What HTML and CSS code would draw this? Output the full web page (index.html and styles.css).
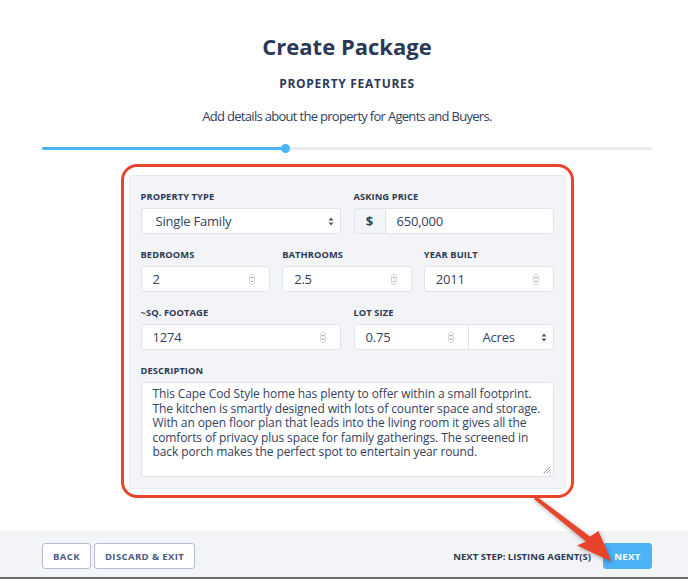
FILE: index.html
```html
<!DOCTYPE html>
<html lang="en">
<head>
  <meta charset="UTF-8" />
  <title>Create Package</title>
  <link rel="stylesheet" href="styles.css">
</head>
<body>
  <div class="page">
    <main class="wizard">
      <h1 class="title">Create Package</h1>
      <h2 class="step-name">PROPERTY FEATURES</h2>
      <p class="step-desc">Add details about the property for Agents and Buyers.</p>

      <div class="progress">
        <div class="progress-fill" style="width: 40%"><span class="progress-dot"></span></div>
      </div>

      <div class="highlight">
        <form class="panel">
          <div class="row cols-2">
            <div class="field">
              <label class="label">PROPERTY TYPE</label>
              <div class="input select select-pad">
                <span>Single Family</span>
                <svg class="sel-arrows" width="6" height="9" viewBox="0 0 6 9"><polygon points="0.5,3.6 3,0.6 5.5,3.6"/><polygon points="0.5,5.4 3,8.4 5.5,5.4"/></svg>
              </div>
            </div>
            <div class="field">
              <label class="label">ASKING PRICE</label>
              <div class="group">
                <span class="addon">$</span>
                <div class="input in-group"><span>650,000</span></div>
              </div>
            </div>
          </div>

          <div class="row cols-3">
            <div class="field">
              <label class="label">BEDROOMS</label>
              <div class="input">
                <span>2</span>
                <svg class="spin" width="6" height="11" viewBox="0 0 6 11"><rect x="0.5" y="0.5" width="5" height="10" rx="2.5"/><path d="M1.8 4.2 L3 3 L4.2 4.2 M1.8 6.8 L3 8 L4.2 6.8"/></svg>
              </div>
            </div>
            <div class="field">
              <label class="label">BATHROOMS</label>
              <div class="input">
                <span>2.5</span>
                <svg class="spin" width="6" height="11" viewBox="0 0 6 11"><rect x="0.5" y="0.5" width="5" height="10" rx="2.5"/><path d="M1.8 4.2 L3 3 L4.2 4.2 M1.8 6.8 L3 8 L4.2 6.8"/></svg>
              </div>
            </div>
            <div class="field">
              <label class="label">YEAR BUILT</label>
              <div class="input">
                <span>2011</span>
                <svg class="spin" width="6" height="11" viewBox="0 0 6 11"><rect x="0.5" y="0.5" width="5" height="10" rx="2.5"/><path d="M1.8 4.2 L3 3 L4.2 4.2 M1.8 6.8 L3 8 L4.2 6.8"/></svg>
              </div>
            </div>
          </div>

          <div class="row cols-2">
            <div class="field">
              <label class="label">~SQ. FOOTAGE</label>
              <div class="input">
                <span>1274</span>
                <svg class="spin" width="6" height="11" viewBox="0 0 6 11"><rect x="0.5" y="0.5" width="5" height="10" rx="2.5"/><path d="M1.8 4.2 L3 3 L4.2 4.2 M1.8 6.8 L3 8 L4.2 6.8"/></svg>
              </div>
            </div>
            <div class="field">
              <label class="label">LOT SIZE</label>
              <div class="group lot">
                <div class="input in-left">
                  <span>0.75</span>
                  <svg class="spin" width="6" height="11" viewBox="0 0 6 11"><rect x="0.5" y="0.5" width="5" height="10" rx="2.5"/><path d="M1.8 4.2 L3 3 L4.2 4.2 M1.8 6.8 L3 8 L4.2 6.8"/></svg>
                </div>
                <div class="input select select-pad in-right">
                  <span>Acres</span>
                  <svg class="sel-arrows" width="6" height="9" viewBox="0 0 6 9"><polygon points="0.5,3.6 3,0.6 5.5,3.6"/><polygon points="0.5,5.4 3,8.4 5.5,5.4"/></svg>
                </div>
              </div>
            </div>
          </div>

          <div class="row">
            <div class="field">
              <label class="label">DESCRIPTION</label>
              <div class="textarea">
                This Cape Cod Style home has plenty to offer within a small footprint.<br>
                The kitchen is smartly designed with lots of counter space and storage.<br>
                With an open floor plan that leads into the living room it gives all the<br>
                comforts of privacy plus space for family gatherings. The screened in<br>
                back porch makes the perfect spot to entertain year round.
                <svg class="grip" width="9" height="9" viewBox="0 0 9 9"><path d="M8.5 1.5 L1.5 8.5 M8.5 4.5 L4.5 8.5 M8.5 7.5 L7.5 8.5"/></svg>
              </div>
            </div>
          </div>
        </form>
      </div>
    </main>

    <footer class="footer">
      <div class="footer-left">
        <button class="btn btn-outline" type="button">BACK</button>
        <button class="btn btn-outline" type="button">DISCARD &amp; EXIT</button>
      </div>
      <div class="footer-right">
        <span class="next-step">NEXT STEP: LISTING AGENT(S)</span>
        <button class="btn btn-primary" type="button">NEXT</button>
      </div>
    </footer>

    <!-- annotation arrow drawn over the page -->
    <svg class="callout" width="688" height="579" viewBox="0 0 688 579">
      <polygon points="534,499 586,541.5 577,545.5 611.5,561.5 598.5,531 590,536.5 536,496"/>
    </svg>
  </div>
</body>
</html>
```

FILE: styles.css
```css
html, body {
  margin: 0;
  padding: 0;
  background: #fff;
  font-family: "Open Sans", "Noto Sans", sans-serif;
  color: #2d3a56;
  overflow: hidden;
}

.page {
  position: relative;
  height: 579px;
  display: flex;
  flex-direction: column;
}

.wizard {
  flex: 1;
  width: 610px;
  margin-left: 42px;
  padding-top: 31px;
  display: flex;
  flex-direction: column;
  align-items: center;
}

.title {
  margin: 0;
  font-size: 22px;
  line-height: 30px;
  font-weight: 700;
  color: #2b3956;
}

.step-name {
  margin: 15px 0 0;
  font-size: 12px;
  line-height: 16px;
  font-weight: 700;
  letter-spacing: 0.7px;
  color: #2b3956;
}

.step-desc {
  margin: 15px 0 0;
  font-size: 13px;
  line-height: 18px;
  letter-spacing: -0.7px;
  color: #33415e;
}

/* progress */
.progress {
  align-self: stretch;
  margin-top: 22px;
  height: 3px;
  background: #e9ebf0;
  border-radius: 2px;
}

.progress-fill {
  position: relative;
  height: 3px;
  background: #4cb3f6;
  border-radius: 2px;
}

.progress-dot {
  position: absolute;
  right: -4px;
  top: -3px;
  width: 9px;
  height: 9px;
  border-radius: 50%;
  background: #4cb3f6;
}

/* red annotation box */
.highlight {
  margin-top: 14px;
  width: 437px;
  padding: 8px 5px 6px 5px;
  border: 3px solid #e9432c;
  border-radius: 16px;
}

.panel {
  background: #f3f4f7;
  border: 1px solid #e8eaef;
  border-radius: 4px;
  padding: 15px 11px 11px;
  display: flex;
  flex-direction: column;
  gap: 15px;
}

.row {
  display: grid;
  gap: 13px;
}

.cols-2 { grid-template-columns: 1fr 1fr; }
.cols-3 { grid-template-columns: 1fr 1fr 1fr; gap: 12px; }

.field {
  display: flex;
  flex-direction: column;
  min-width: 0;
}

.label {
  font-size: 9.3px;
  line-height: 12px;
  font-weight: 700;
  letter-spacing: 0.1px;
  color: #2e3a52;
  margin-bottom: 5px;
}

.input {
  box-sizing: border-box;
  height: 26px;
  background: #fff;
  border: 1px solid #dfe3ea;
  border-radius: 3px;
  padding: 0 14px 0 11px;
  display: flex;
  align-items: center;
  justify-content: space-between;
  font-size: 13px;
  letter-spacing: -0.2px;
  color: #34425e;
}

.select-pad {
  padding: 0 6px 0 14px;
}

.spin rect {
  fill: #fff;
  stroke: #c9cdd4;
  stroke-width: 0.8;
}

.spin path {
  fill: none;
  stroke: #7d838d;
  stroke-width: 0.8;
}

.sel-arrows polygon {
  fill: #505561;
}

.group {
  display: flex;
}

.addon {
  box-sizing: border-box;
  width: 31px;
  height: 26px;
  display: flex;
  align-items: center;
  justify-content: center;
  background: #f3f4f7;
  border: 1px solid #dfe3ea;
  border-right: 0;
  border-radius: 3px 0 0 3px;
  font-size: 13px;
  font-weight: 700;
  color: #34425e;
}

.in-group {
  flex: 1;
  border-radius: 0 3px 3px 0;
}

.lot .in-left {
  width: 115px;
  border-radius: 3px 0 0 3px;
}

.lot .in-right {
  flex: 1;
  border-left: 0;
  border-radius: 0 3px 3px 0;
}

.textarea {
  position: relative;
  box-sizing: border-box;
  height: 95px;
  background: #fff;
  border: 1px solid #dfe3ea;
  border-radius: 3px;
  padding: 4px 11px;
  font-size: 12px;
  line-height: 14.5px;
  letter-spacing: -0.1px;
  white-space: nowrap;
  color: #34425e;
}

.grip {
  position: absolute;
  right: 2px;
  bottom: 2px;
}

.grip path {
  stroke: #8f959e;
  stroke-width: 0.9;
  fill: none;
}

/* footer */
.footer {
  box-sizing: border-box;
  height: 48px;
  background: #f3f4f7;
  border-bottom: 2px solid #6a6a6a;
  padding: 12px 36px 0 42px;
  display: flex;
  justify-content: space-between;
  align-items: flex-start;
}

.footer-left, .footer-right {
  display: flex;
  align-items: center;
}

.footer-left { gap: 3px; }
.footer-right { gap: 12px; }

.btn {
  box-sizing: border-box;
  height: 26px;
  padding: 0 10px;
  border-radius: 3px;
  font-family: "Open Sans", "Noto Sans", sans-serif;
  font-size: 9.5px;
  font-weight: 700;
  letter-spacing: 0.4px;
  cursor: pointer;
}

.btn-outline {
  background: #fff;
  border: 1px solid #b3bcd1;
  color: #4a5a82;
}

.btn-primary {
  width: 49px;
  padding: 0;
  background: #4cb3f6;
  border: 1px solid #4cb3f6;
  color: #fff;
}

.next-step {
  font-size: 9.5px;
  font-weight: 700;
  letter-spacing: 0;
  color: #2b3956;
}

.callout {
  position: absolute;
  left: 0;
  top: 0;
  pointer-events: none;
  filter: drop-shadow(1px 2px 2px rgba(0, 0, 0, 0.3));
}

.callout polygon {
  fill: #e8432b;
}
```
